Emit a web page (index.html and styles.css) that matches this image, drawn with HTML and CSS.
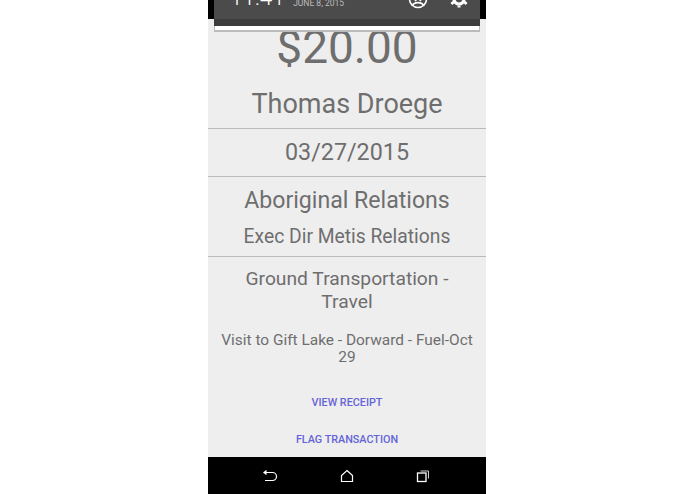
FILE: index.html
```html
<!DOCTYPE html>
<html lang="en">
<head>
    <meta charset="UTF-8">
    <meta name="viewport" content="width=device-width, initial-scale=1.0">
    <title>Transaction</title>
    <link rel="stylesheet" href="styles.css">
</head>
<body>
    <div class="phone">
        <div class="shade">
            <div class="shade-panel">
                <div class="shade-top">
                    <span class="clock">11:41</span>
                    <span class="date">JUNE 8, 2015</span>
                    <svg class="shade-icon user-icon" viewBox="0 0 20 20" width="20" height="20">
                        <circle cx="10" cy="-1" r="8.5" fill="none" stroke="#fff" stroke-width="1.6"/>
                        <path d="M4 6 C6 1.5 14 1.5 16 6" fill="none" stroke="#fff" stroke-width="1.6"/>
                        <path d="M7 1 L10 -2 L13 1" fill="none" stroke="#fff" stroke-width="1.6"/>
                    </svg>
                    <svg class="shade-icon gear-icon" viewBox="0 0 20 20" width="20" height="20">
                        <circle cx="10" cy="-1" r="5" fill="none" stroke="#fff" stroke-width="3.2"/>
                        <path d="M2.5 2 L4.5 4 M17.5 2 L15.5 4 M10 5.5 L10 7.5" stroke="#fff" stroke-width="3"/>
                    </svg>
                </div>
                <div class="shade-bottom"></div>
            </div>
        </div>

        <div class="content">
            <div class="amount">$20.00</div>
            <div class="name">Thomas Droege</div>
            <div class="row date-row">03/27/2015</div>
            <div class="row dept-row">
                <div class="dept">Aboriginal Relations</div>
                <div class="unit">Exec Dir Metis Relations</div>
            </div>
            <div class="row category">Ground Transportation - Travel</div>
            <div class="desc">Visit to Gift Lake - Dorward - Fuel-Oct 29</div>
            <a class="action view-link" href="#">VIEW RECEIPT</a>
            <a class="action flag-link" href="#">FLAG TRANSACTION</a>
        </div>

        <div class="navbar">
            <svg viewBox="0 0 16 14" width="16" height="14">
                <path d="M2.5 3.5 H10.5 A4 4 0 0 1 10.5 11.5 H3" fill="none" stroke="#fff" stroke-width="1.2"/>
                <path d="M4.5 0.8 V6.2 L1 3.5 Z" fill="#fff"/>
            </svg>
            <svg viewBox="0 0 14 14" width="14" height="14">
                <path d="M7 1.5 L12.5 6.5 V12.5 H1.5 V6.5 Z" fill="none" stroke="#fff" stroke-width="1.2"/>
            </svg>
            <svg viewBox="0 0 14 14" width="14" height="14">
                <rect x="1.5" y="4" width="8.5" height="8.5" fill="none" stroke="#fff" stroke-width="1.3"/>
                <path d="M4.5 2 H12.5 V9.5" fill="none" stroke="#ccc" stroke-width="1"/>
            </svg>
        </div>
    </div>
</body>
</html>
```

FILE: styles.css
```css
html, body {
    margin: 0;
    background-color: #fff;
}
body {
    font-family: Roboto, "Liberation Sans", sans-serif;
    height: 494px;
    overflow: hidden;
}
a {
    text-decoration: none;
}

.phone {
    position: relative;
    width: 278px;
    height: 494px;
    margin-left: 208px;
    display: flex;
    flex-direction: column;
    background: #eee;
}

/* notification shade pulled over the page */
.shade {
    position: absolute;
    top: 0;
    left: 0;
    width: 100%;
    height: 19px;
    background: #000;
}
.shade-panel {
    width: 266px;
    margin-left: 6px;
    background: #fff;
    border: 1px solid #bbb;
    border-width: 0 1px 2px;
    box-sizing: border-box;
    height: 32px;
}
.shade-top {
    height: 19px;
    background: #4b4b4b;
    overflow: hidden;
    display: flex;
    align-items: flex-start;
    color: #fff;
    margin: 0 -1px;
    padding-left: 16px;
}
.shade-bottom {
    height: 7px;
    background: #3c3c3c;
    margin: 0 -1px;
}
.clock {
    font-size: 22.5px;
    font-weight: 300;
    line-height: 19px;
    margin-top: -12px;
    white-space: nowrap;
}
.date {
    font-size: 8.5px;
    color: #bbb;
    margin-left: 8.5px;
    line-height: 10px;
    margin-top: -2px;
    white-space: nowrap;
}
.shade-icon {
    flex: none;
}
.user-icon {
    margin-left: 64px;
}
.gear-icon {
    margin-left: 21px;
}

.content {
    flex: 1;
    padding-top: 22px;
    text-align: center;
    color: #6e6e6e;
}
.amount {
    font-size: 46px;
    line-height: 50px;
}
.name {
    font-size: 27px;
    line-height: 32px;
    margin-top: 16px;
    padding-bottom: 7.5px;
}
.row {
    border-top: 1px solid #bbb;
}
.date-row {
    font-size: 23.3px;
    line-height: 47px;
}
.dept-row {
    padding-top: 9px;
    padding-bottom: 7px;
}
.dept {
    font-size: 23.1px;
    line-height: 30px;
}
.unit {
    font-size: 19.3px;
    line-height: 24px;
    margin-top: 9px;
}
.category {
    font-size: 19.25px;
    line-height: 23px;
    padding: 10px 20px 0;
}
.desc {
    font-size: 15.45px;
    line-height: 17.5px;
    margin-top: 19px;
    padding: 0 10px;
}
.action {
    display: block;
    font-size: 10.8px;
    font-weight: 500;
    line-height: 14px;
    color: #6464d8;
}
.view-link {
    margin-top: 29px;
}
.flag-link {
    margin-top: 23px;
}

.navbar {
    height: 37px;
    background: #000;
    display: flex;
    justify-content: center;
    align-items: center;
    gap: 62px;
    padding-right: 2px;
}
```
